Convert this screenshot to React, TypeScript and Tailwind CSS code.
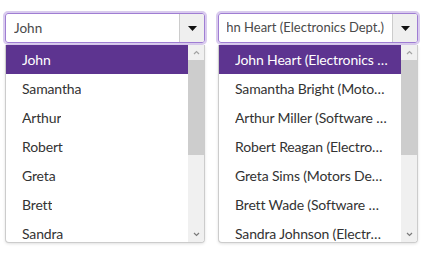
import React from "react";

const shortNames = ["John", "Samantha", "Arthur", "Robert", "Greta", "Brett", "Sandra"];
const longNames = [
  "John Heart (Electronics Dept.)",
  "Samantha Bright (Motors Dept.)",
  "Arthur Miller (Software Dept.)",
  "Robert Reagan (Electronics Dept.)",
  "Greta Sims (Motors Dept.)",
  "Brett Wade (Software Dept.)",
  "Sandra Johnson (Electronics Dept.)",
];

function Scrollbar() {
  return (
    <div className="w-[16px] shrink-0 bg-[#f0f0f0] flex flex-col">
      <div className="h-[15px] flex items-center justify-center">
        <svg width="7" height="5" viewBox="0 0 7 5">
          <path d="M1 4 L3.5 1.5 L6 4" fill="none" stroke="#a3a3a3" strokeWidth="1.2" />
        </svg>
      </div>
      <div className="h-[95px] bg-[#cdcdcd]" />
      <div className="flex-1" />
      <div className="h-[15px] flex items-center justify-center">
        <svg width="7" height="5" viewBox="0 0 7 5">
          <path d="M1 1 L3.5 3.5 L6 1" fill="none" stroke="#7a7a7a" strokeWidth="1.2" />
        </svg>
      </div>
    </div>
  );
}

function Combo({ value, items, scrolled }: { value: string; items: string[]; scrolled?: boolean }) {
  return (
    <div className="w-[204px] flex flex-col">
      <div className="rounded-[5px] border-2 border-[#d9cbee]">
        <div className="h-[30px] flex rounded-[3px] border border-[#9f7dd3] bg-white overflow-hidden">
          <div className="flex-1 min-w-0 flex px-[8px]">
            <div
              className={
                scrolled
                  ? "flex-1 min-w-0 flex justify-end items-center overflow-hidden text-[13px] text-[#4a4a4a] whitespace-nowrap"
                  : "flex-1 min-w-0 flex items-center overflow-hidden text-[13.5px] text-[#4a4a4a] whitespace-nowrap"
              }
            >
              {value}
            </div>
          </div>
          <div className="w-[25px] shrink-0 border-l border-[#cccccc] bg-[#efefef] flex items-center justify-center">
            <svg width="9" height="5" viewBox="0 0 9 5">
              <path d="M0 0 H9 L4.5 5 Z" fill="#111111" />
            </svg>
          </div>
        </div>
      </div>
      <div className="mx-[2px] h-[198px] flex border border-t-0 border-[#cccccc] rounded-b-[4px] bg-white overflow-hidden shadow-[0_1px_3px_rgba(0,0,0,0.12)]">
        <div className="flex-1 min-w-0 flex flex-col">
          {items.map((name, i) => (
            <div
              key={i}
              className={
                i === 0
                  ? "h-[29px] shrink-0 flex items-center pl-[16px] pr-[13px] bg-[#5d3490] text-white text-[14px] tracking-[-0.15px]"
                  : "h-[29px] shrink-0 flex items-center pl-[16px] pr-[13px] text-[#333333] text-[14px] tracking-[-0.15px]"
              }
            >
              <span className="truncate">{name}</span>
            </div>
          ))}
        </div>
        <Scrollbar />
      </div>
    </div>
  );
}

export default function App() {
  return (
    <div
      className="w-[422px] h-[265px] bg-white flex gap-[9px] pl-[3px] pt-[11px]"
      style={{ fontFamily: 'Lato, "Noto Sans", sans-serif' }}
    >
      <Combo value="John" items={shortNames} />
      <Combo value="John Heart (Electronics Dept.)" items={longNames} scrolled />
    </div>
  );
}
